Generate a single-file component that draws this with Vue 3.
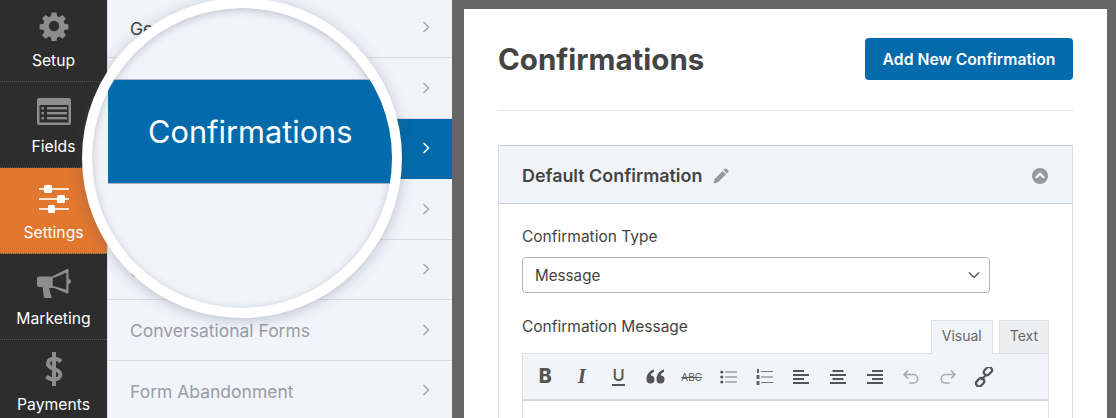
<script setup>
const sideItems = [
  { label: 'Setup', icon: 'gear' },
  { label: 'Fields', icon: 'fields' },
  { label: 'Settings', icon: 'sliders', active: true },
  { label: 'Marketing', icon: 'horn' },
  { label: 'Payments', icon: 'dollar' },
]
const menu = [
  { label: 'General', dark: true },
  { label: '' },
  { label: '', active: true },
  { label: '' },
  { label: 'Custom', dark: true },
  { label: 'Conversational Forms' },
  { label: 'Form Abandonment' },
]
</script>

<template>
  <div class="page">
    <nav class="side">
      <div v-for="item in sideItems" :key="item.label" class="side-item" :class="{ on: item.active }">
        <svg v-if="item.icon === 'gear'" class="ico i-gear" width="30" height="30" viewBox="0 0 32 32">
          <path fill="#8c8d8e" fill-rule="evenodd" d="M13.4 1.5h5.2l.7 4.1 2.3 1 3.4-2.4 3.7 3.7-2.4 3.400 1 2.300 4.100.7v5.200l-4.100.7-1 2.300 2.400 3.400-3.700 3.700-3.400-2.400-2.300 1-.7 4.100h-5.200l-.7-4.100-2.300-1-3.400 2.400-3.700-3.700 2.400-3.400-1-2.300-4.100-.7v-5.200l4.100-.7 1-2.300-2.400-3.400 3.700-3.700 3.400 2.400 2.300-1zM16 10.500a5.500 5.500 0 1 0 0 11 5.500 5.500 0 0 0 0-11z" />
        </svg>
        <svg v-else-if="item.icon === 'fields'" class="ico i-fields" width="34" height="27" viewBox="0 0 34 27">
          <rect x="0" y="0" width="34" height="27" rx="2" fill="#8c8d8e" />
          <rect x="2.500" y="7" width="29" height="17.500" fill="#2d2d2d" />
          <g fill="#8c8d8e">
            <rect x="10" y="9" width="20" height="2.400" /><rect x="10" y="14" width="20" height="2.400" /><rect x="10" y="19" width="20" height="2.400" />
            <rect x="4.500" y="9" width="2.400" height="2.400" /><rect x="4.500" y="14" width="2.400" height="2.400" /><rect x="4.500" y="19" width="2.400" height="2.400" />
          </g>
        </svg>
        <svg v-else-if="item.icon === 'sliders'" class="ico i-sliders" width="30" height="28" viewBox="0 0 30 28">
          <g fill="#fff">
            <rect x="0" y="3.200" width="30" height="1.600" /><rect x="0" y="13.200" width="30" height="1.600" /><rect x="0" y="23.200" width="30" height="1.600" />
            <rect x="5" y="0" width="8" height="8" rx="1.500" /><rect x="18" y="10" width="8" height="8" rx="1.500" /><rect x="9" y="20" width="7" height="8" rx="1.500" />
          </g>
        </svg>
        <svg v-else-if="item.icon === 'horn'" class="ico i-horn" width="34" height="29" viewBox="0 0 34 29">
          <path fill="#8c8d8e" fill-rule="evenodd" d="M30 0h1.500v9.800c1.500.4 2.500 1.500 2.500 2.700s-1 2.300-2.500 2.700V24.500H30l-13-5.500h-5l2.500 9c.1.500-.2 1-.8 1H8c-.6 0-1-.4-1.100-1L5.500 18H2C.9 18 0 17.100 0 16V9.500C0 8.400.9 7.500 2 7.500h13zM29.300 3.800L15.700 9.300v7.400L29.300 20.700z" />
        </svg>
        <svg v-else class="ico i-dollar" width="18" height="34" viewBox="0 0 18 34">
          <path fill="none" stroke="#8c8d8e" stroke-width="4" d="M16 9.500C14 7.700 11.500 6.700 9 6.700c-3.500 0-6 1.700-6 4.700 0 3 2.500 4.200 6 5.400 3.700 1.200 6.300 2.500 6.300 5.700 0 3.100-2.600 5-6.300 5-2.800 0-5.500-1.200-7.500-3" />
          <rect x="7" y="0" width="4" height="34" fill="#8c8d8e" />
        </svg>
        <span class="side-label">{{ item.label }}</span>
      </div>
    </nav>

    <aside class="menu">
      <div v-for="(row, i) in menu" :key="i" class="row" :class="{ on: row.active, dark: row.dark }">
        <span class="row-text">{{ row.label }}</span>
        <svg width="8" height="14" viewBox="0 0 8 14" class="chev">
          <path d="M1.500 2l5 5-5 5" fill="none" stroke="currentColor" stroke-width="1.400" />
        </svg>
      </div>
    </aside>

    <main class="sheet">
      <header class="head">
        <h1>Confirmations</h1>
        <button class="add">Add New Confirmation</button>
      </header>
      <section class="panel">
        <div class="panel-head">
          <strong>Default Confirmation</strong>
          <svg class="pencil" width="16" height="16" viewBox="0 0 16 16">
            <path fill="#98999b" d="M11.800.8a1.300 1.300 0 0 1 1.800 0l1.600 1.600a1.300 1.300 0 0 1 0 1.800l-1.300 1.300-3.400-3.400zM9.700 2.900l3.400 3.400-8 8L.6 15.400l1.100-4.500z" />
          </svg>
          <svg class="toggle" width="16" height="16" viewBox="0 0 16 16">
            <circle cx="8" cy="8" r="8" fill="#98999b" />
            <path d="M4 9.700l4-4 4 4" fill="none" stroke="#fff" stroke-width="2.200" />
          </svg>
        </div>
        <div class="panel-body">
          <label class="lbl">Confirmation Type</label>
          <div class="select">
            <span>Message</span>
            <svg width="12" height="8" viewBox="0 0 12 8"><path d="M1 1.500l5 5 5-5" fill="none" stroke="#555" stroke-width="1.400" /></svg>
          </div>
          <div class="msg-head">
            <label class="lbl">Confirmation Message</label>
            <div class="tabs">
              <span class="tab cur">Visual</span>
              <span class="tab">Text</span>
            </div>
          </div>
          <div class="editor">
            <div class="tools">
              <span class="t-b">B</span>
              <span class="t-i">I</span>
              <span class="t-u">U</span>
              <svg width="19" height="15" viewBox="0 0 19 15"><g fill="#555"><path d="M8 .5C3.800 1.500.5 5 .5 10.500a4 4 0 1 0 4.300-4C5 4.800 6.300 3.500 8 3z" /><path d="M18 .5c-4.200 1-7.500 4.500-7.500 10a4 4 0 1 0 4.300-4c.2-1.700 1.500-3 3.200-3.500z" /></g></svg>
              <span class="t-s">ABC</span>
              <svg width="17" height="14" viewBox="0 0 17 14"><g fill="#555"><circle cx="1.800" cy="2" r="1.600" /><circle cx="1.800" cy="7" r="1.600" /><circle cx="1.800" cy="12" r="1.600" /></g><g fill="#777"><rect x="5" y="1.500" width="12" height="1" /><rect x="5" y="6.500" width="12" height="1" /><rect x="5" y="11.500" width="12" height="1" /></g></svg>
              <svg width="17" height="16" viewBox="0 0 17 16"><g fill="#666"><rect x="1" y="0" width="2" height="4" /><rect x=".5" y="6" width="3" height="4" /><rect x=".5" y="12" width="3" height="4" /></g><g fill="#777"><rect x="5" y="2" width="12" height="1" /><rect x="5" y="7.500" width="12" height="1" /><rect x="5" y="13" width="12" height="1" /></g></svg>
              <svg v-for="k in [0, 1, 2]" :key="k" width="16" height="14" viewBox="0 0 16 14">
                <g fill="#555">
                  <rect :x="k * 2.500" y="0" width="11" height="2" />
                  <rect x="0" y="4" width="16" height="2" />
                  <rect :x="k * 2.500" y="8" width="11" height="2" />
                  <rect x="0" y="12" width="16" height="2" />
                </g>
              </svg>
              <svg width="18" height="16" viewBox="0 0 18 16"><path d="M6 1.500L2 5.500l4 4M2 5.500h9.500a4.200 4.200 0 0 1 0 8.500H7" fill="none" stroke="#aaa" stroke-width="1.600" /></svg>
              <svg width="18" height="16" viewBox="0 0 18 16"><path d="M12 1.500l4 4-4 4M16 5.500H6.500a4.200 4.200 0 0 0 0 8.500H11" fill="none" stroke="#aaa" stroke-width="1.600" /></svg>
              <svg width="20" height="20" viewBox="0 0 18 18"><g fill="none" stroke="#555" stroke-width="2"><rect x="8.500" y="1" width="8" height="5.500" rx="2.700" transform="rotate(-45 12.500 3.700)" /><rect x="1.500" y="11" width="8" height="5.500" rx="2.700" transform="rotate(-45 5.500 13.700)" /><path d="M6.500 11.500l5-5" /></g></svg>
            </div>
            <div class="text-area"></div>
          </div>
        </div>
      </section>
    </main>

    <div class="lens">
      <div class="lens-band">Confirmations</div>
    </div>
  </div>
</template>

<style scoped>
.page {
  position: relative;
  width: 1116px;
  height: 418px;
  overflow: hidden;
  display: flex;
  background: #666;
  font-family: Inter, "Liberation Sans", sans-serif;
  color: #444;
}
.side { width: 107px; flex: none; background: #2d2d2d; margin-top: -4px; height: 440px; }
.side-item {
  height: 86px;
  display: flex;
  flex-direction: column;
  align-items: center;
  justify-content: flex-end;
  padding-bottom: 11px;
  box-sizing: border-box;
  color: #fff;
  font-size: 15.700px;
  border-bottom: 1px dotted #555;
}
.side-item.on { background: #e27730; }
.i-gear { margin-bottom: 11px; }
.i-fields { margin-bottom: 13px; }
.i-sliders { margin-bottom: 11px; }
.i-horn { margin-bottom: 12px; }
.i-dollar { margin-bottom: 10px; }
.side-label { line-height: 18px; }

.menu { width: 345px; flex: none; background: #f1f4fa; border-left: 1px solid #dfe1e8; box-sizing: border-box; margin-top: -2.500px; height: 430px; }
.row {
  height: 60.500px;
  box-sizing: border-box;
  padding: 0 22px 0 22px;
  display: flex;
  align-items: center;
  justify-content: space-between;
  border-bottom: 1px solid #d8dbe2;
  font-size: 17.500px;
  color: #9a9da3;
}
.row-text { position: relative; top: 1px; }
.row.dark { color: #444; }
.row.on { background: #036aab; color: #fff; border-bottom-color: #036aab; }
.chev { color: #a3a5a9; }
.row.on .chev { color: #fff; }

.sheet {
  width: 643px;
  margin: 9px 0 0 12px;
  flex: none;
  background: #fff;
  box-sizing: border-box;
  padding: 29px 34px 0;
  height: 440px;
}
.head {
  display: flex;
  align-items: center;
  justify-content: space-between;
  padding-bottom: 30px;
  border-bottom: 1px solid #e2e3e6;
  margin-bottom: 34px;
}
h1 { margin: 0; font-size: 29.500px; line-height: 42px; font-weight: 700; color: #444; }
.add {
  height: 42px;
  width: 208px;
  border: 0;
  border-radius: 4px;
  background: #036aab;
  color: #fff;
  font: 600 15.750px Inter, "Liberation Sans", sans-serif;
  padding: 0;
}
.panel { border: 1px solid #dcdee3; border-top-color: #c9ccd2; }
.panel-head {
  height: 58px;
  box-sizing: border-box;
  background: #f1f4f9;
  border-bottom: 1px solid #c9ccd2;
  display: flex;
  align-items: center;
  padding: 2px 24px 0 23px;
  font-size: 17.900px;
}
.panel-head strong { font-weight: 600; color: #444; }
.pencil { margin-left: 11px; }
.toggle { margin-left: auto; }
.panel-body { padding: 23px 23px 0; }
.lbl { display: block; font-size: 15.500px; line-height: 20px; color: #444; }
.select {
  margin-top: 10px;
  width: 468px;
  height: 36px;
  box-sizing: border-box;
  border: 1px solid #b3b5b9;
  border-radius: 4px;
  display: flex;
  align-items: center;
  justify-content: space-between;
  padding: 0 9px 0 12px;
  font-size: 15.200px;
  color: #444;
}
.msg-head { display: flex; justify-content: space-between; align-items: flex-start; margin-top: 23px; height: 37px; }
.msg-head .lbl { margin-top: 1px; }
.tabs { display: flex; gap: 6px; align-items: flex-end; height: 37px; }
.tab {
  height: 33px;
  box-sizing: border-box;
  border: 1px solid #dfe1e6;
  border-bottom: 0;
  background: #eceef2;
  font-size: 14px;
  line-height: 30px;
  padding: 0 10px;
  color: #666;
}
.tab.cur { background: #f1f4f9; height: 34px; margin-bottom: -1px; position: relative; z-index: 1; }
.editor { border: 1px solid #dfe1e6; border-bottom: 0; }
.tools {
  height: 47px;
  box-sizing: border-box;
  background: #f1f4f9;
  border-bottom: 2px solid #d6d8de;
  display: grid;
  grid-template-columns: repeat(13, 36.600px);
  justify-items: center;
  align-items: center;
  padding-left: 4px;
  color: #555;
}
.t-b { font-weight: 800; font-size: 19.500px; line-height: 1; }
.t-i { font-family: "Liberation Serif", serif; font-style: italic; font-weight: 700; font-size: 21px; line-height: 1; }
.t-u { font-size: 16.500px; font-weight: 500; line-height: 1; border-bottom: 2px solid #555; padding: 0 0 1px; }
.t-s { font-size: 10px; text-decoration: line-through; }
.text-area { height: 30px; background: #fff; }

.lens {
  position: absolute;
  left: 82px;
  top: -2px;
  width: 320px;
  height: 320px;
  box-sizing: border-box;
  border: 10px solid #fff;
  border-radius: 50%;
  background: #f1f4fa;
  overflow: hidden;
  box-shadow: 0 2px 14px rgba(60, 70, 90, .3), inset 0 2px 8px rgba(60, 70, 90, .28);
}
.lens-band {
  position: absolute;
  left: 16px;
  right: -10px;
  top: 71px;
  height: 105px;
  box-sizing: border-box;
  background: #036aab;
  color: #fff;
  font-size: 30.750px;
  line-height: 103px;
  padding-left: 40px;
  border-top: 1px solid #a9b3c4;
  border-bottom: 1px solid #a9b3c4;
}
</style>
